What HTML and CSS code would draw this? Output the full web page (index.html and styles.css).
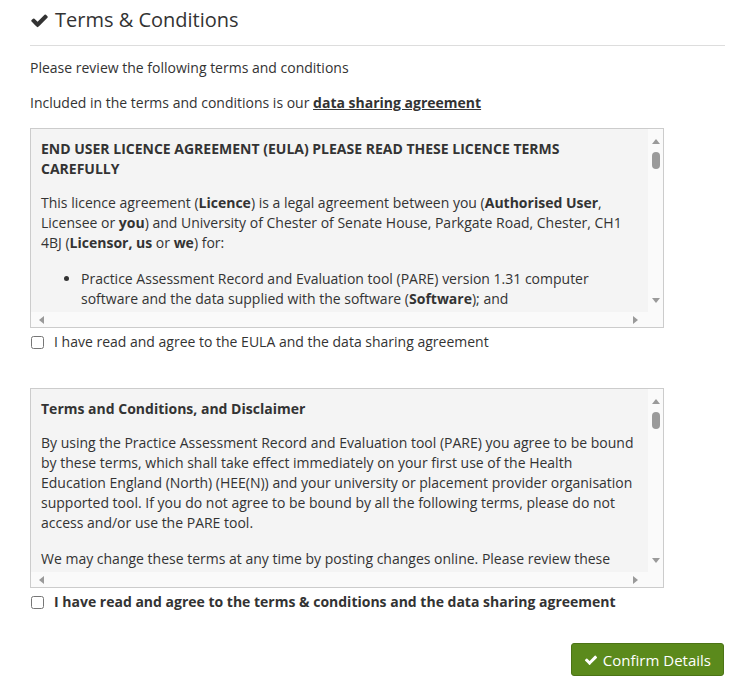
FILE: index.html
```html
<!DOCTYPE html>
<html lang="en">
<head>
<meta charset="utf-8">
<title>Terms &amp; Conditions</title>
<link rel="stylesheet" href="styles.css">
</head>
<body>
<div class="page">
  <div class="page-header">
    <h2 class="title"><svg class="icon-check" viewBox="0 0 1792 1792" aria-hidden="true"><path d="M1671 566q0 40-28 68l-724 724-136 136q-28 28-68 28t-68-28l-136-136-362-362q-28-28-28-68t28-68l136-136q28-28 68-28t68 28l294 295 656-657q28-28 68-28t68 28l136 136q28 28 28 68z"/></svg>Terms &amp; Conditions</h2>
  </div>

  <p class="intro">Please review the following terms and conditions</p>
  <p class="intro intro-last">Included in the terms and conditions is our <a href="#" class="link">data sharing agreement</a></p>

  <div class="terms-box">
    <div class="terms-view">
      <p class="terms-heading">END USER LICENCE AGREEMENT (EULA) PLEASE READ THESE LICENCE TERMS CAREFULLY</p>
      <p>This licence agreement (<b>Licence</b>) is a legal agreement between you (<b>Authorised User</b>, Licensee or <b>you</b>) and University of Chester of Senate House, Parkgate Road, Chester, CH1 4BJ (<b>Licensor, us</b> or <b>we</b>) for:</p>
      <ul>
        <li>Practice Assessment Record and Evaluation tool (PARE) version 1.31 computer software and the data supplied with the software (<b>Software</b>); and</li>
      </ul>
    </div>
    <div class="vscroll">
      <svg class="arrow-v" viewBox="0 0 8 5" aria-hidden="true"><path d="M0 5 L4 0 L8 5 Z"/></svg>
      <div class="thumb"></div>
      <div class="track-fill"></div>
      <svg class="arrow-v" viewBox="0 0 8 5" aria-hidden="true"><path d="M0 0 L8 0 L4 5 Z"/></svg>
    </div>
    <div class="hscroll">
      <svg class="arrow-h" viewBox="0 0 5 8" aria-hidden="true"><path d="M5 0 L5 8 L0 4 Z"/></svg>
      <svg class="arrow-h" viewBox="0 0 5 8" aria-hidden="true"><path d="M0 0 L5 4 L0 8 Z"/></svg>
    </div>
    <div class="corner"></div>
  </div>
  <label class="agree"><input type="checkbox" class="agree-box"><span>I have read and agree to the EULA and the data sharing agreement</span></label>

  <div class="terms-box terms-box-second">
    <div class="terms-view">
      <p class="terms-heading">Terms and Conditions, and Disclaimer</p>
      <p>By using the Practice Assessment Record and Evaluation tool (PARE) you agree to be bound by these terms, which shall take effect immediately on your first use of the Health Education England (North) (HEE(N)) and your university or placement provider organisation supported tool. If you do not agree to be bound by all the following terms, please do not access and/or use the PARE tool.</p>
      <p>We may change these terms at any time by posting changes online. Please review these</p>
    </div>
    <div class="vscroll">
      <svg class="arrow-v" viewBox="0 0 8 5" aria-hidden="true"><path d="M0 5 L4 0 L8 5 Z"/></svg>
      <div class="thumb"></div>
      <div class="track-fill"></div>
      <svg class="arrow-v" viewBox="0 0 8 5" aria-hidden="true"><path d="M0 0 L8 0 L4 5 Z"/></svg>
    </div>
    <div class="hscroll">
      <svg class="arrow-h" viewBox="0 0 5 8" aria-hidden="true"><path d="M5 0 L5 8 L0 4 Z"/></svg>
      <svg class="arrow-h" viewBox="0 0 5 8" aria-hidden="true"><path d="M0 0 L5 4 L0 8 Z"/></svg>
    </div>
    <div class="corner"></div>
  </div>
  <label class="agree agree-strong"><input type="checkbox" class="agree-box"><span>I have read and agree to the terms &amp; conditions and the data sharing agreement</span></label>

  <div class="actions">
    <button type="button" class="btn-confirm"><svg class="icon-check-sm" viewBox="0 0 1792 1792" aria-hidden="true"><path d="M1671 566q0 40-28 68l-724 724-136 136q-28 28-68 28t-68-28l-136-136-362-362q-28-28-28-68t28-68l136-136q28-28 68-28t68 28l294 295 656-657q28-28 68-28t68 28l136 136q28 28 28 68z"/></svg>Confirm Details</button>
  </div>
</div>
</body>
</html>
```

FILE: styles.css
```css
html, body {
  margin: 0;
  padding: 0;
  background: #ffffff;
}

body {
  font-family: "Open Sans", "Liberation Sans", Arial, sans-serif;
  font-size: 14px;
  line-height: 20px;
  color: #333333;
}

.page {
  padding: 0 14px 0 30px;
}

.page-header {
  padding-top: 9px;
  padding-bottom: 14px;
  border-bottom: 1px solid #dddddd;
}

.title {
  margin: 0;
  font-size: 20px;
  font-weight: 400;
  line-height: 22px;
  color: #333333;
  display: flex;
  align-items: center;
}

.icon-check {
  width: 19px;
  height: 19px;
  fill: #333333;
  margin-right: 6px;
}

.intro {
  margin: 12px 0 0 0;
}

.intro-last {
  margin-top: 15px;
  margin-bottom: 15px;
}

.link {
  color: #333333;
  font-weight: 700;
  text-decoration: underline;
}

.terms-box {
  width: 634px;
  height: 200px;
  box-sizing: border-box;
  border: 1px solid #cccccc;
  display: grid;
  grid-template-columns: 1fr 15px;
  grid-template-rows: 1fr 15px;
  background: #fafafa;
}

.terms-view {
  background: #f4f4f4;
  overflow: hidden;
  padding: 10px 10px 0 10px;
}

.terms-view p {
  margin: 0 0 16px 0;
}

.terms-view .terms-heading {
  font-weight: 700;
  margin-bottom: 14px;
}

.terms-view ul {
  margin: 0;
  padding-left: 40px;
}

.vscroll {
  display: flex;
  flex-direction: column;
  align-items: center;
  background: #fafafa;
}

.arrow-v {
  width: 8px;
  height: 5px;
  fill: #9a9a9a;
  flex: none;
}

.vscroll .arrow-v:first-child {
  margin-top: 10px;
}

.vscroll .arrow-v:last-child {
  margin-bottom: 9px;
}

.thumb {
  width: 8px;
  height: 17px;
  border-radius: 4px;
  background: #9a9a9a;
  margin-top: 8px;
  flex: none;
}

.track-fill {
  flex: 1;
}

.hscroll {
  display: flex;
  align-items: center;
  justify-content: space-between;
  padding: 0 10px 0 8px;
  background: #fafafa;
}

.arrow-h {
  width: 5px;
  height: 8px;
  fill: #9a9a9a;
}

.corner {
  background: #fafafa;
}

.terms-box-second {
  margin-top: 36px;
}

.agree {
  display: flex;
  align-items: center;
  margin-top: 4px;
  height: 20px;
  cursor: pointer;
}

.agree-box {
  width: 13px;
  height: 13px;
  margin: 0 10px 0 1px;
}

.agree-strong {
  font-weight: 700;
}

.actions {
  display: flex;
  justify-content: flex-end;
  margin-top: 31px;
  padding-right: 1px;
}

.btn-confirm {
  display: inline-flex;
  align-items: center;
  font-family: "Open Sans", "Liberation Sans", Arial, sans-serif;
  font-size: 15px;
  line-height: 20px;
  color: #ffffff;
  background: #5b8a1c;
  border: 1px solid #4c7416;
  border-radius: 3px;
  padding: 6px 12px 5px 12px;
  cursor: pointer;
}

.icon-check-sm {
  width: 14px;
  height: 14px;
  fill: #ffffff;
  margin-right: 5px;
}
```
